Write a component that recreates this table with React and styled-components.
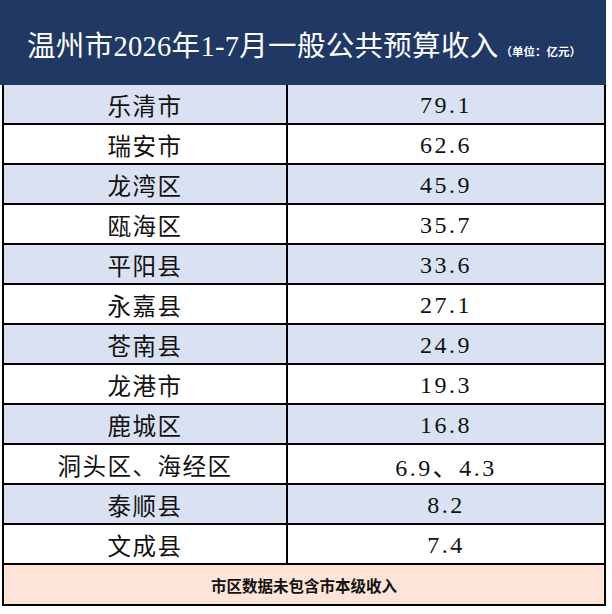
import styled, { createGlobalStyle } from 'styled-components';

const rows = [
  { name: '乐清市', value: '79.1' },
  { name: '瑞安市', value: '62.6' },
  { name: '龙湾区', value: '45.9' },
  { name: '瓯海区', value: '35.7' },
  { name: '平阳县', value: '33.6' },
  { name: '永嘉县', value: '27.1' },
  { name: '苍南县', value: '24.9' },
  { name: '龙港市', value: '19.3' },
  { name: '鹿城区', value: '16.8' },
  { name: '洞头区、海经区', value: '6.9、4.3' },
  { name: '泰顺县', value: '8.2' },
  { name: '文成县', value: '7.4' },
];

function App() {
  return (
    <>
      <GlobalStyle />
      <Page>
        <Header>
          <Title>
            温州市2026年1-7月一般公共预算收入
            <Unit>（单位：亿元）</Unit>
          </Title>
        </Header>
        <Body>
          {rows.map((row, i) => (
            <Row key={row.name} $shaded={i % 2 === 0}>
              <NameCell>{row.name}</NameCell>
              <ValueCell>{row.value}</ValueCell>
            </Row>
          ))}
          <Footer>市区数据未包含市本级收入</Footer>
        </Body>
      </Page>
    </>
  );
}

export default App;

const GlobalStyle = createGlobalStyle`
  html, body {
    margin: 0;
    padding: 0;
    background: #fff;
  }
  body {
    font-family: "Liberation Serif", "Noto Sans CJK SC", serif;
    color: #111;
  }
`;

const Page = styled.div`
  width: 606px;
  padding-bottom: 8px;
`;

const Header = styled.div`
  height: 85px;
  background: #203864;
  display: flex;
  align-items: center;
  padding: 2px 0 0 27px;
  box-sizing: border-box;
`;

const Title = styled.h1`
  margin: 0;
  display: flex;
  align-items: baseline;
  color: #fff;
  font-family: "Liberation Serif", "Noto Sans CJK SC", serif;
  font-size: 28.5px;
  font-weight: 400;
  letter-spacing: 0.3px;
  white-space: nowrap;
`;

const Unit = styled.span`
  margin-left: 2px;
  font-family: "Noto Sans CJK SC", sans-serif;
  font-size: 11.5px;
  font-weight: 700;
  letter-spacing: 0;
`;

const Body = styled.div`
  margin-left: 2px;
  border-left: 2px solid #000;
  border-right: 2px solid #000;
  border-bottom: 2px solid #000;
`;

const Row = styled.div`
  display: grid;
  grid-template-columns: 284px 1fr;
  height: 40px;
  box-sizing: border-box;
  border-bottom: 2px solid #000;
  background: ${({ $shaded }) => ($shaded ? '#d9e1f2' : '#fff')};
`;

const NameCell = styled.div`
  display: flex;
  align-items: center;
  justify-content: center;
  border-right: 2px solid #000;
  font-family: "Noto Sans CJK SC", sans-serif;
  font-size: 23.5px;
  letter-spacing: 1.5px;
  padding-top: 2px;
`;

const ValueCell = styled.div`
  display: flex;
  align-items: center;
  justify-content: center;
  font-family: "Liberation Serif", "Noto Sans CJK SC", serif;
  font-size: 24px;
  letter-spacing: 2.5px;
  padding-top: 2px;
`;

const Footer = styled.div`
  height: 39px;
  display: flex;
  align-items: center;
  justify-content: center;
  background: #fce4d6;
  font-family: "Noto Sans CJK SC", sans-serif;
  font-size: 15.5px;
  font-weight: 700;
`;
